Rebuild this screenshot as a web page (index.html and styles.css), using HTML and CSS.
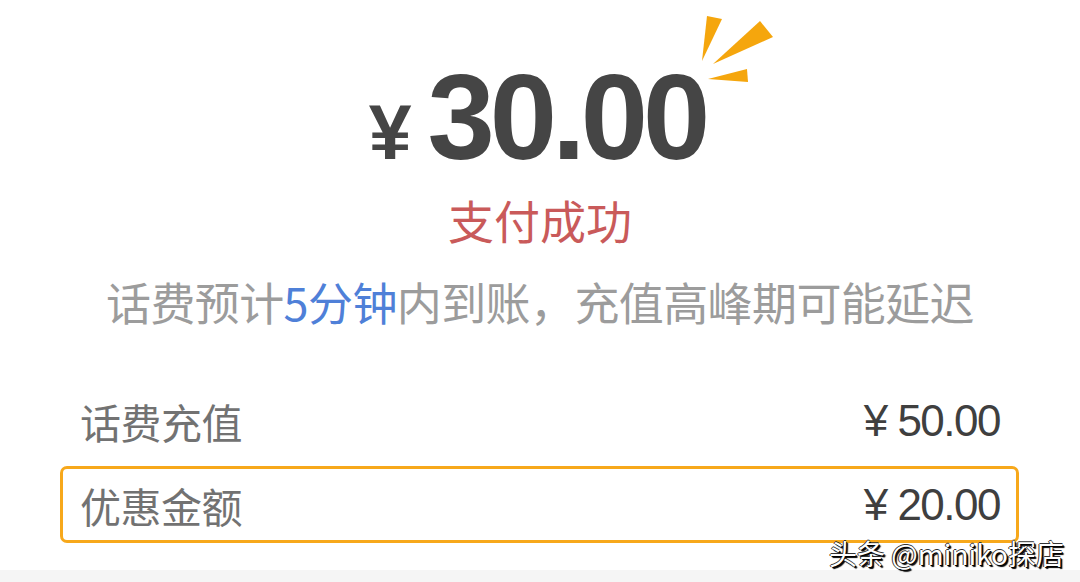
FILE: index.html
```html
<!DOCTYPE html>
<html lang="zh-CN">
<head>
<meta charset="utf-8">
<title>支付成功</title>
<link rel="stylesheet" href="styles.css">
</head>
<body>
<div class="page">
  <section class="hero">
    <div class="amount">
      <span class="yen">¥</span><span class="num">30.00</span>
      <svg class="spark" width="80" height="80" viewBox="0 0 80 80">
        <polygon points="0,47 5,2 20,5" fill="#f5a60d"/>
        <polygon points="11,50 58,7 71,23" fill="#f5a60d"/>
        <polygon points="6,65 45,55 46,68" fill="#f5a60d"/>
      </svg>
    </div>
    <div class="status">支付成功</div>
    <div class="note">话费预计<span class="blue">5分钟</span>内到账，充值高峰期可能延迟</div>
  </section>
  <section class="rows">
    <div class="row"><span class="label">话费充值</span><span class="value">¥ 50.00</span></div>
    <div class="row hl"><span class="label">优惠金额</span><span class="value">¥ 20.00</span></div>
  </section>
  <div class="band"></div>
  <div class="watermark">头条 @miniko探店</div>
</div>
</body>
</html>
```

FILE: styles.css
```css
html, body {
  margin: 0;
  padding: 0;
  background: #fff;
}
.page {
  position: relative;
  width: 1080px;
  height: 582px;
  overflow: hidden;
  font-family: "Noto Sans CJK SC", "Noto Sans", sans-serif;
  display: flex;
  flex-direction: column;
}
.hero {
  display: flex;
  flex-direction: column;
  align-items: center;
  padding-top: 57px;
}
.amount {
  position: relative;
  display: flex;
  align-items: baseline;
  font-family: "Liberation Sans", Arial, sans-serif;
  font-weight: bold;
  color: #454545;
  line-height: 1;
  margin-left: -6px;
}
.yen {
  font-size: 77px;
  margin-right: 16px;
}
.num {
  font-size: 121px;
  letter-spacing: -5px;
}
.spark {
  position: absolute;
  left: 100%;
  top: -43px;
  margin-left: -3px;
}
.status {
  margin-top: 18px;
  font-size: 46px;
  line-height: 46px;
  color: #c95a5a;
}
.note {
  margin-top: 37px;
  font-size: 45px;
  line-height: 45px;
  color: #9c9c9c;
  letter-spacing: -0.6px;
}
.blue {
  color: #4f80d8;
}
.rows {
  display: flex;
  flex-direction: column;
  gap: 7px;
  margin: 58px 61px 0 60px;
}
.row {
  height: 71px;
  border: 3px solid transparent;
  border-radius: 7px;
  display: flex;
  align-items: center;
  justify-content: space-between;
  padding: 0 16px 0 17px;
}
.row.hl {
  border-color: #f7a81b;
}
.label {
  font-size: 41px;
  color: #727272;
  letter-spacing: -0.5px;
}
.value {
  font-family: "Liberation Sans", Arial, sans-serif;
  font-size: 44px;
  color: #3f3f3f;
  letter-spacing: -1.5px;
}
.band {
  position: absolute;
  left: 0;
  right: 0;
  bottom: 0;
  height: 12px;
  background: #f5f5f5;
}
.watermark {
  position: absolute;
  left: 829px;
  top: 533px;
  font-size: 28px;
  color: #fff;
  text-shadow: 1px 1px 0 #000, -1px 0 0 #333, 0 -1px 0 #333, 2px 2px 1px #000;
}
```
